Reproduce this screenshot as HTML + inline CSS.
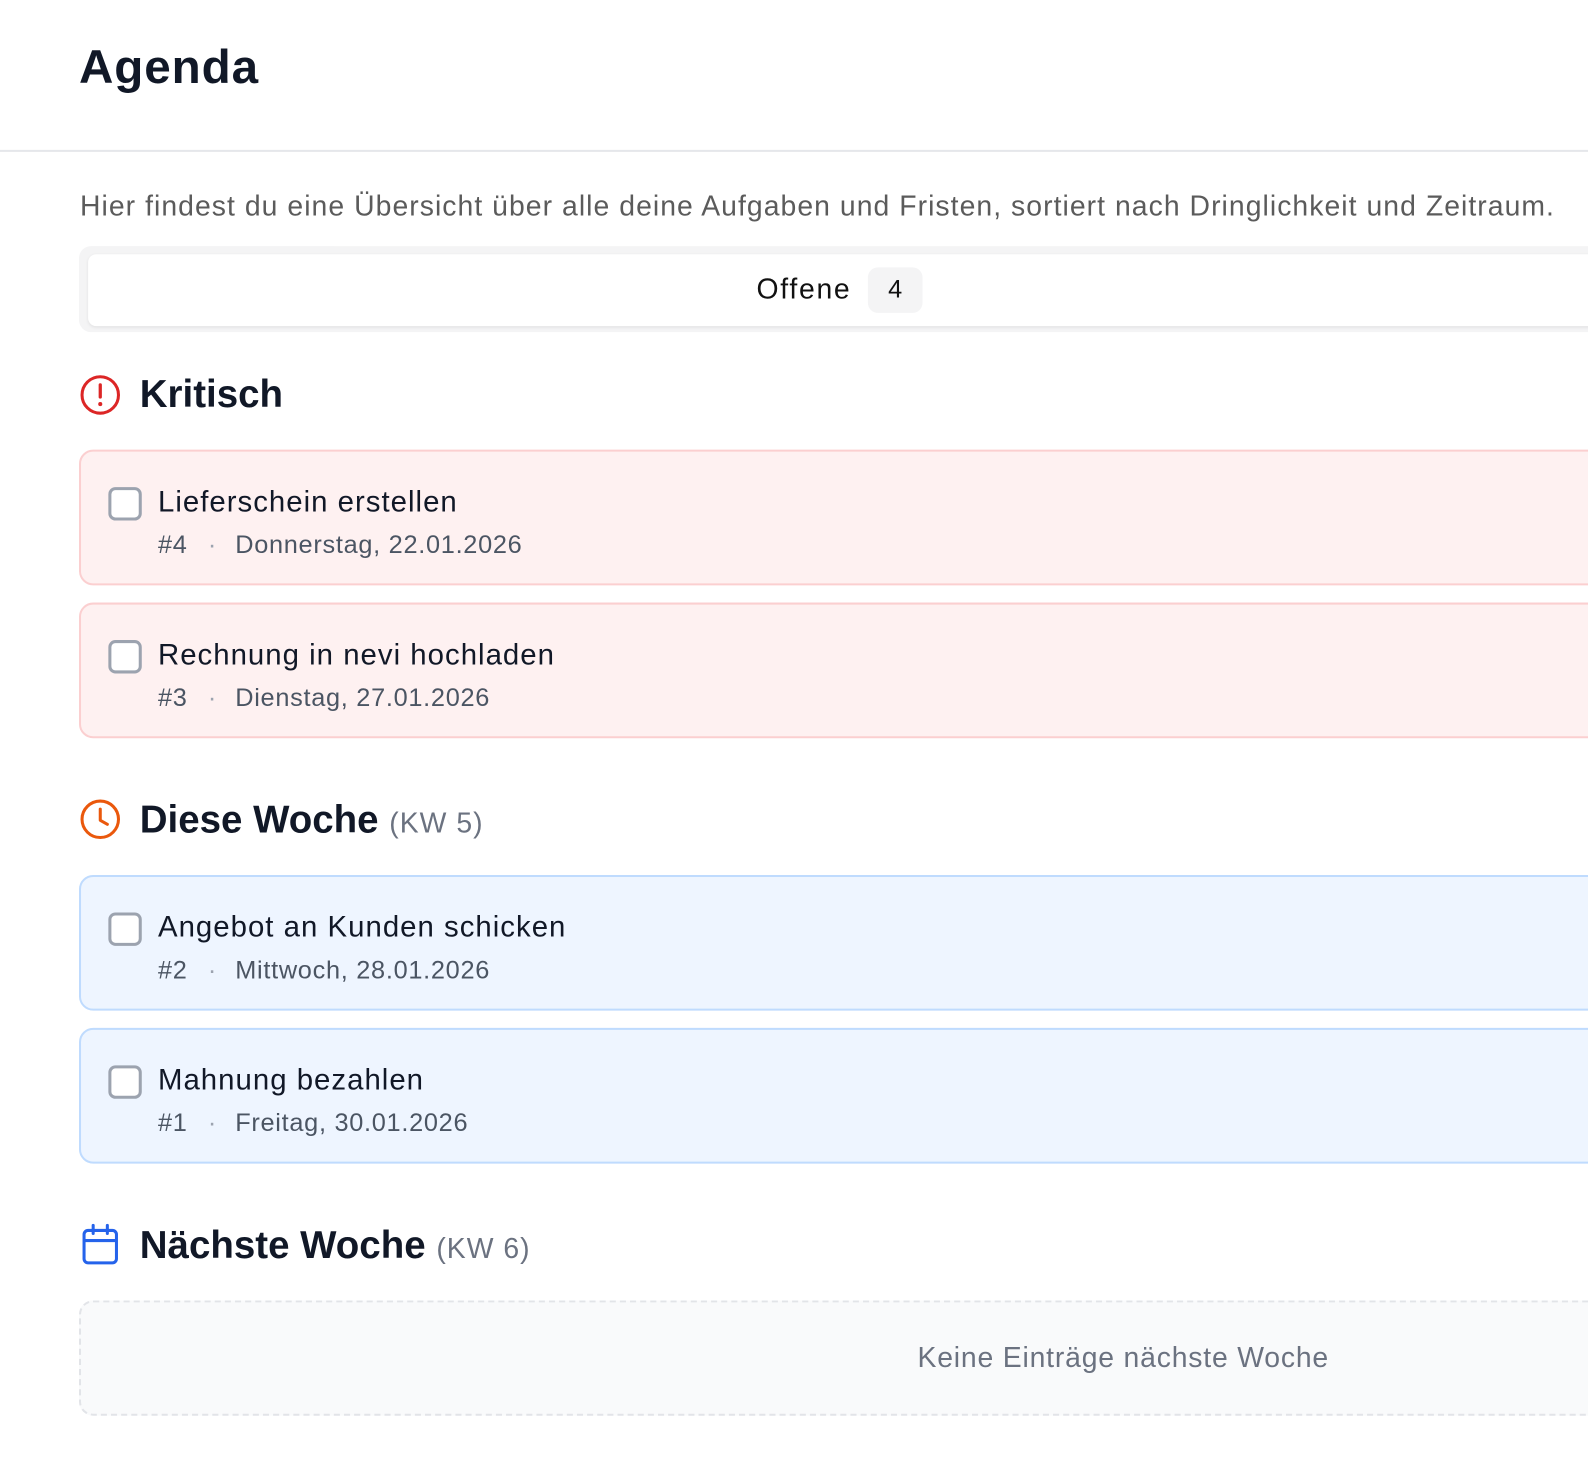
<!DOCTYPE html>
<html><head><meta charset="utf-8"><style>
*{box-sizing:border-box;margin:0;padding:0}
html,body{width:1588px;height:1452px;overflow:hidden;background:#fff;font-family:"Liberation Sans",Arial,sans-serif;color:#111827}
#w{position:absolute;left:0;top:0;width:1588px;height:1452px;transform:scale(1.0127);transform-origin:0 0}
.a{position:absolute;white-space:nowrap}
.card{position:absolute;left:78px;width:2062px;height:134px;border-radius:14px;border:2px solid}
.red{background:#fef1f1;border-color:#fbcfd0}
.blue{background:#eef5ff;border-color:#bfdbfe}
.cb{position:absolute;left:27px;top:35px;width:33px;height:33px;border:3px solid #9ca3af;border-radius:7px;background:#fff}
.t{position:absolute;left:76px;top:34px;font-size:29px;color:#111827;letter-spacing:1px}
.m{position:absolute;left:76px;top:78px;font-size:25px;color:#4b5563;white-space:nowrap;letter-spacing:0.7px}
.d{color:#9ca3af;margin:0 18px 0 20px}
.h{font-size:38px;font-weight:bold;color:#111827}
.k{font-size:28px;font-weight:normal;color:#6b7280;letter-spacing:1px}
</style></head><body><div id="w">
<div class="a" style="left:78px;top:38px;font-size:47px;font-weight:bold;color:#111827;letter-spacing:0.9px">Agenda</div>
<div class="a" style="left:0;top:148px;width:1588px;height:2px;background:#e5e7eb"></div>
<div class="a" style="left:79px;top:188px;font-size:28px;color:#5b5b5b;letter-spacing:1.03px">Hier findest du eine Übersicht über alle deine Aufgaben und Fristen, sortiert nach Dringlichkeit und Zeitraum.</div>
<div class="a" style="left:78px;top:243px;width:2000px;height:85px;background:#f4f4f5;border-radius:12px"></div>
<div class="a" style="left:87px;top:251px;width:1990px;height:71px;background:#fff;border-radius:8px;box-shadow:0 1px 3px rgba(0,0,0,.08)"></div>
<div class="a" style="left:747px;top:270px;font-size:28px;color:#111;letter-spacing:1.7px">Offene</div>
<div class="a" style="left:857px;top:264px;width:54px;height:45px;background:#f4f4f5;border-radius:10px;font-size:25px;text-align:center;line-height:45px;color:#111">4</div>

<svg class="a" style="left:78px;top:369px" width="42" height="42" viewBox="0 0 42 42"><circle cx="21" cy="21" r="18" fill="none" stroke="#dc2626" stroke-width="3"/><line x1="21" y1="11" x2="21" y2="23" stroke="#dc2626" stroke-width="3.2" stroke-linecap="round"/><circle cx="21" cy="30" r="2" fill="#dc2626"/></svg>
<div class="a h" style="left:138px;top:369px">Kritisch</div>

<div class="card red" style="top:444px"><div class="cb"></div><div class="t">Lieferschein erstellen</div><div class="m">#4<span class="d">·</span>Donnerstag, 22.01.2026</div></div>
<div class="card red" style="top:595px"><div class="cb"></div><div class="t">Rechnung in nevi hochladen</div><div class="m">#3<span class="d">·</span>Dienstag, 27.01.2026</div></div>

<svg class="a" style="left:78px;top:788px" width="42" height="42" viewBox="0 0 42 42"><circle cx="21" cy="21" r="18" fill="none" stroke="#ea580c" stroke-width="3"/><polyline points="21,11 21,22 28,26" fill="none" stroke="#ea580c" stroke-width="3" stroke-linecap="round" stroke-linejoin="round"/></svg>
<div class="a h" style="left:138px;top:789px">Diese Woche <span class="k">(KW 5)</span></div>

<div class="card blue" style="top:864px"><div class="cb"></div><div class="t">Angebot an Kunden schicken</div><div class="m">#2<span class="d">·</span>Mittwoch, 28.01.2026</div></div>
<div class="card blue" style="top:1015px"><div class="cb"></div><div class="t">Mahnung bezahlen</div><div class="m">#1<span class="d">·</span>Freitag, 30.01.2026</div></div>

<svg class="a" style="left:78px;top:1206px" width="42" height="46" viewBox="0 0 42 46"><rect x="5" y="9" width="32" height="32" rx="4" fill="none" stroke="#2563eb" stroke-width="3"/><line x1="5" y1="19" x2="37" y2="19" stroke="#2563eb" stroke-width="3"/><line x1="14" y1="4" x2="14" y2="12" stroke="#2563eb" stroke-width="3" stroke-linecap="round"/><line x1="28" y1="4" x2="28" y2="12" stroke="#2563eb" stroke-width="3" stroke-linecap="round"/></svg>
<div class="a h" style="left:138px;top:1209px">Nächste Woche <span class="k">(KW 6)</span></div>

<div class="a" style="left:78px;top:1284px;width:2062px;height:114px;border:2px dashed #e2e4e8;border-radius:14px;background:#f9fafb"></div>
<div class="a" style="left:906px;top:1325px;font-size:28px;color:#6b7280;letter-spacing:0.8px">Keine Einträge nächste Woche</div>
</div></body></html>
